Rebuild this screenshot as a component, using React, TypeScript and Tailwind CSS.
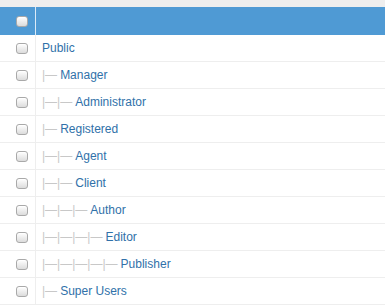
import React from "react";

const groups = [
  { name: "Public", level: 0 },
  { name: "Manager", level: 1 },
  { name: "Administrator", level: 2 },
  { name: "Registered", level: 1 },
  { name: "Agent", level: 2 },
  { name: "Client", level: 2 },
  { name: "Author", level: 3 },
  { name: "Editor", level: 4 },
  { name: "Publisher", level: 5 },
  { name: "Super Users", level: 1 },
];

const Check = () => (
  <span className="block w-[12px] h-[11px] rounded-[3px] border border-[#a9a9a9] bg-gradient-to-b from-white to-[#dcdcdc] shadow-[inset_0_1px_0_#fff]" />
);

const App = () => {
  return (
    <div
      className="w-[385px] h-[306px] bg-white overflow-hidden text-[12px] antialiased"
      style={{ fontFamily: '"Liberation Sans", Arial, sans-serif' }}
    >
      <div className="h-[7px] bg-[#eeeeee]" />
      <div className="flex h-[28px] bg-[#4f9ad4]">
        <div className="w-[36px] flex items-center justify-center pl-[9px] border-r border-[#dbeaf7]">
          <Check />
        </div>
        <div className="flex-1" />
      </div>
      {groups.map((g) => (
        <div key={g.name} className="flex h-[27px] border-b border-[#eeeeee]">
          <div className="w-[36px] flex items-center justify-center pl-[9px] border-r border-[#eeeeee]">
            <Check />
          </div>
          <div className="flex-1 flex items-center pl-[6px] text-[#3071a9]">
            {g.level > 0 && (
              <span className="text-[#c8c8c8] mr-[3px]">{"|—".repeat(g.level)}</span>
            )}
            {g.name}
          </div>
        </div>
      ))}
    </div>
  );
};

export default App;
